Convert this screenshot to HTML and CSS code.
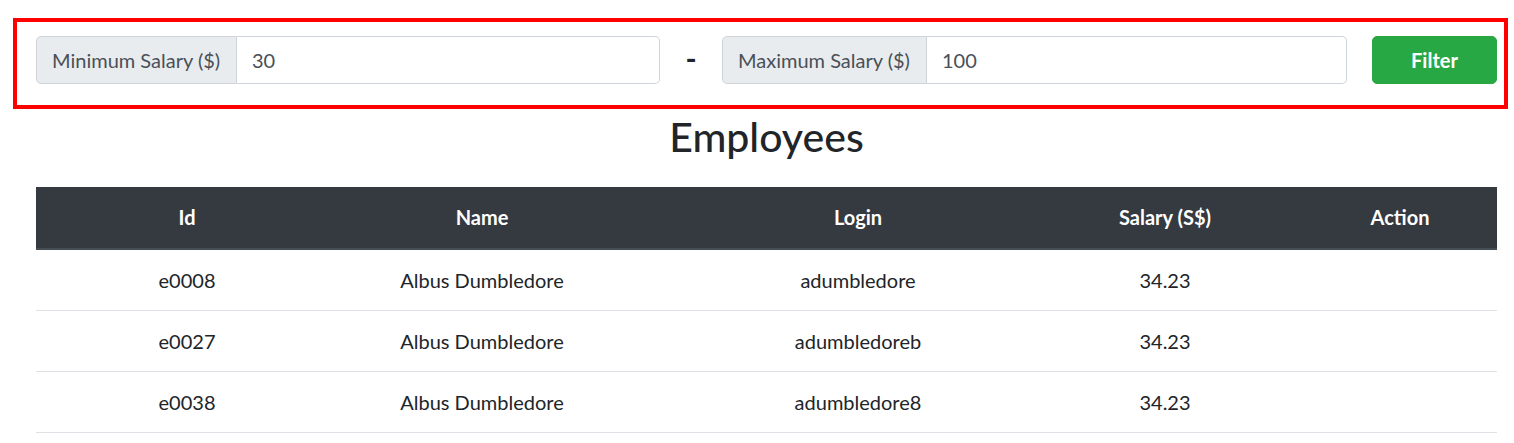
FILE: index.html
```html
<!DOCTYPE html>
<html lang="en">
<head>
<meta charset="utf-8">
<title>Employees</title>
<link rel="stylesheet" href="styles.css">
</head>
<body>
<form class="filter-box">
  <div class="input-group group-min">
    <span class="group-label label-min">Minimum Salary ($)</span>
    <input class="group-input" type="text" value="30">
  </div>
  <span class="dash">-</span>
  <div class="input-group group-max">
    <span class="group-label label-max">Maximum Salary ($)</span>
    <input class="group-input" type="text" value="100">
  </div>
  <button class="btn-filter" type="button">Filter</button>
</form>

<h2 class="title">Employees</h2>

<table class="emp-table">
  <colgroup>
    <col class="c-id">
    <col class="c-name">
    <col class="c-login">
    <col class="c-salary">
    <col class="c-action">
  </colgroup>
  <thead>
    <tr>
      <th>Id</th>
      <th>Name</th>
      <th>Login</th>
      <th>Salary (S$)</th>
      <th class="th-action">Action</th>
    </tr>
  </thead>
  <tbody>
    <tr><td>e0008</td><td>Albus Dumbledore</td><td>adumbledore</td><td>34.23</td><td></td></tr>
    <tr><td>e0027</td><td>Albus Dumbledore</td><td>adumbledoreb</td><td>34.23</td><td></td></tr>
    <tr><td>e0038</td><td>Albus Dumbledore</td><td>adumbledore8</td><td>34.23</td><td></td></tr>
  </tbody>
</table>
</body>
</html>
```
FILE: styles.css
```css
* { box-sizing: border-box; }

body {
  margin: 0;
  font-family: Lato, "Open Sans", sans-serif;
  font-size: 20px;
  color: #212529;
  background: #fff;
}

.filter-box {
  display: flex;
  align-items: center;
  margin: 18px 6px 0 13px;
  border: 4px solid #ff0000;
  padding: 14px 7px 21px 19px;
}

.input-group {
  display: flex;
  height: 48px;
}
.group-min { width: 624px; }
.group-max { width: 625px; }

.group-label {
  display: flex;
  align-items: center;
  padding: 0 15px;
  background: #e9ecef;
  border: 1px solid #ced4da;
  border-radius: 5px 0 0 5px;
  color: #495057;
  white-space: nowrap;
}
.label-min { width: 201px; }
.label-max { width: 205px; }

.group-input {
  flex: 1;
  min-width: 0;
  height: 48px;
  margin: 0;
  border: 1px solid #ced4da;
  border-left: none;
  border-radius: 0 5px 5px 0;
  padding: 0 15px;
  font-family: inherit;
  font-size: 20px;
  color: #495057;
  background: #fff;
  outline: none;
}

.dash {
  width: 62px;
  height: 48px;
  text-align: center;
  font-size: 30px;
  font-weight: 700;
  line-height: 45px;
  color: #212529;
}

.btn-filter {
  margin-left: 25px;
  width: 125px;
  height: 48px;
  border: 1px solid #28a745;
  border-radius: 5px;
  background: #28a745;
  color: #fff;
  font-family: inherit;
  font-size: 20px;
  font-weight: 700;
  cursor: pointer;
}

.title {
  margin: 4px 17px 26px 36px;
  text-align: center;
  font-size: 41px;
  font-weight: 500;
  line-height: 48px;
}

.emp-table {
  margin-left: 36px;
  width: 1461px;
  border-collapse: collapse;
  table-layout: fixed;
}

.c-id { width: 302px; }
.c-name { width: 288px; }
.c-login { width: 464px; }
.c-salary { width: 150px; }
.c-action { width: 257px; }

.emp-table th {
  background: #343a40;
  color: #fff;
  font-weight: 700;
  text-align: center;
  padding: 15px 15px 16px;
  line-height: 30px;
  border-bottom: 2px solid #454d55;
  white-space: nowrap;
}
.emp-table th.th-action { padding-left: 78px; }

.emp-table td {
  text-align: center;
  padding: 15px;
  line-height: 30px;
  border-bottom: 1px solid #dee2e6;
  white-space: nowrap;
}
```
